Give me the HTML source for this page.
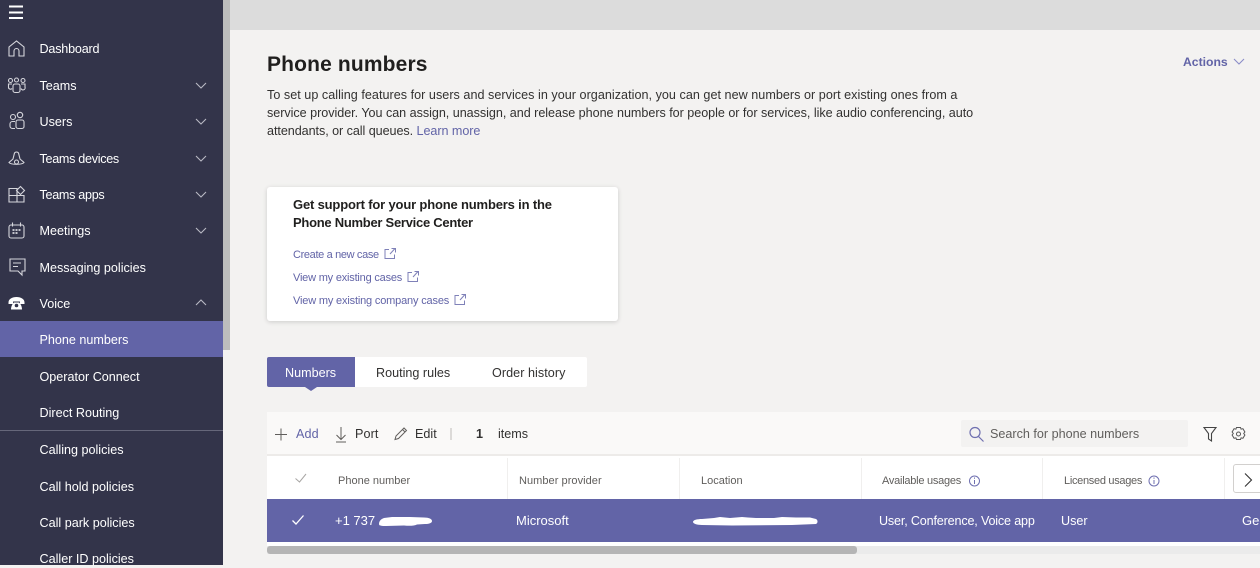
<!DOCTYPE html>
<html><head><meta charset="utf-8">
<style>
html,body{margin:0;padding:0}
body{width:1260px;height:565px;overflow:hidden;position:relative;background:#f3f2f1;font-family:"Liberation Sans",sans-serif;font-size:12.6px;color:#323130}
.a{position:absolute}
.t{position:absolute;white-space:nowrap;line-height:18px}
.n{position:absolute;left:39.500px;white-space:nowrap;color:#fff;font-size:12.600px;line-height:18px}
svg{position:absolute;overflow:visible;fill:none}
.ic{stroke:#d6d6dc;stroke-width:1.100}
.ch{stroke:#b9b9c4;stroke-width:1.100}
.h{font-size:11px;color:#605e5c;top:472px}
.l{font-size:11px;color:#6264a7}
.b{font-weight:bold;color:#201f1e;font-size:13px}
</style></head><body>
<div class="a" style="left:0;top:0;width:223px;height:565px;background:#33344a"></div>
<div class="a" style="left:223px;top:0;width:7px;height:565px;background:#f3f2f1"></div>
<div class="a" style="left:223px;top:0;width:7px;height:350px;background:#bdbdbd"></div>
<div class="a" style="left:230px;top:0;width:1030px;height:30px;background:#dcdcdc"></div>

<svg style="left:0;top:0" width="223" height="320">
<path d="M9 6.500h14M9 12.500h14M9 18h14" stroke="#fff" stroke-width="2"/>
<path class="ic" d="M9 56v-9l7.500-6 7.500 6v9h-5v-5a2.500 2.500 0 0 0-5 0v5z"/>
<g class="ic"><circle cx="10.500" cy="80.500" r="2"/><circle cx="16.500" cy="80" r="2"/><circle cx="23" cy="80.500" r="2"/><rect x="13" y="84" width="7" height="8.500" rx="2"/><path d="M12 84H8.500v3a2 2 0 0 0 3.500 1.500M21 84h4v3a2 2 0 0 1-4 1.500"/></g>
<g class="ic"><circle cx="13" cy="117" r="2.500"/><circle cx="20" cy="115" r="2.700"/><rect x="16" y="120" width="8" height="8.500" rx="2"/><path d="M15 121.500h-2.500a2.500 2.500 0 0 0-2.500 2.500v2a2.500 2.500 0 0 0 2.500 2.500H15"/></g>
<g class="ic"><path d="M14.500 153a2.500 2.500 0 0 1 4 0l1.500 6 4 3.500c-1 1.500-4 1.800-7.500 1.800S10 164 9 162.500l4-3.500z"/><circle cx="16.500" cy="162" r="2"/></g>
<g class="ic"><path d="M9 188.500h8v13.500H9zM9 195.500h15v6.500h-7"/><path d="M20.500 186.500l4 4-4 4-4-4z"/></g>
<g class="ic"><rect x="9" y="225" width="15" height="13" rx="2"/><path d="M12.500 222.500v4M20.500 222.500v4"/><path d="M12.500 230h8M12.500 233h5" stroke-width="1.700" stroke-dasharray="2 1"/></g>
<g class="ic"><path d="M10 259h15v12h-3v4l-4-4h-8z"/><path d="M13 263h8M13 266.500h5"/></g>
<path fill="#fff" d="M8.500 302.500c0-3.500 3.500-5.500 8-5.500s8 2 8 5.500v1.500H20v-2.500h-7V304H8.500z"/>
<path fill="#fff" d="M11 309.500c0-3 1.500-6 3-7h5c1.500 1 3 4 3 7z"/><circle cx="16.500" cy="305.500" r="1.800" fill="#33344a"/>
<g class="ch">
<path d="M196 83l5 5 5-5M196 119l5 5 5-5M196 156l5 5 5-5M196 192l5 5 5-5M196 228l5 5 5-5"/>
<path d="M196 305l5-5 5 5"/>
</g>
</svg>

<div class="n" style="top:40px;letter-spacing:-.2px">Dashboard</div>
<div class="n" style="top:77px">Teams</div>
<div class="n" style="top:113px">Users</div>
<div class="n" style="top:150px;letter-spacing:-.3px">Teams devices</div>
<div class="n" style="top:186px;letter-spacing:-.3px">Teams apps</div>
<div class="n" style="top:222px">Meetings</div>
<div class="n" style="top:259px">Messaging policies</div>
<div class="n" style="top:295px">Voice</div>
<div class="a" style="left:0;top:321px;width:223px;height:36px;background:#6264a7"></div>
<div class="n" style="top:331px">Phone numbers</div>
<div class="n" style="top:368px">Operator Connect</div>
<div class="n" style="top:404px">Direct Routing</div>
<div class="a" style="left:0;top:430px;width:223px;height:1px;background:#66677a"></div>
<div class="n" style="top:441px">Calling policies</div>
<div class="n" style="top:478px">Call hold policies</div>
<div class="n" style="top:514px">Call park policies</div>
<div class="n" style="top:550px">Caller ID policies</div>

<div class="t" style="left:267px;top:52px;font-size:21px;line-height:26px;font-weight:bold;color:#201f1e;letter-spacing:.15px">Phone numbers</div>
<div class="t" style="left:1183px;top:53px;color:#6264a7;font-weight:bold;font-size:12.200px">Actions</div>
<svg style="left:1233px;top:58px" width="12" height="8"><path d="M1 1l5 5 5-5" stroke="#8b8cc7" stroke-width="1.100"/></svg>

<div class="t" style="left:267px;top:86px;letter-spacing:.03px">To set up calling features for users and services in your organization, you can get new numbers or port existing ones from a</div>
<div class="t" style="left:267px;top:104px;letter-spacing:-.035px">service provider. You can assign, unassign, and release phone numbers for people or for services, like audio conferencing, auto</div>
<div class="t" style="left:267px;top:122px;letter-spacing:-.06px">attendants, or call queues. <span style="color:#6264a7">Learn more</span></div>

<div class="a" style="left:267px;top:187px;width:351px;height:134px;background:#fff;border-radius:3px;box-shadow:0 1px 5px rgba(0,0,0,.16)"></div>
<div class="t b" style="left:293px;top:196px;letter-spacing:-.17px">Get support for your phone numbers in the</div>
<div class="t b" style="left:293px;top:214px;letter-spacing:-.27px">Phone Number Service Center</div>
<div class="t l" style="left:293px;top:246px;letter-spacing:-.35px">Create a new case</div>
<div class="t l" style="left:293px;top:269px;letter-spacing:-.2px">View my existing cases</div>
<div class="t l" style="left:293px;top:292px;letter-spacing:-.17px">View my existing company cases</div>
<svg style="left:0;top:0" width="1260" height="565">
<g stroke="#7f81b8" stroke-width="1">
<path d="M389 249.500h-4v9h9.500v-4M390 254l5-5.500M391.500 248.500h4v4"/>
<path d="M412 272.500h-4v9h9.500v-4M413 277l5-5.500M414.500 271.500h4v4"/>
<path d="M459 295.500h-4v9h9.500v-4M460 300l5-5.500M461.500 294.500h4v4"/>
</g></svg>

<div class="a" style="left:267px;top:357px;width:320px;height:30px;background:#fff;border-radius:2px"></div>
<div class="a" style="left:267px;top:357px;width:88px;height:30px;background:#6264a7;border-radius:2px 0 0 2px"></div>
<div class="a" style="left:305px;top:387px;width:0;height:0;border-left:6px solid transparent;border-right:6px solid transparent;border-top:4px solid #6264a7"></div>
<div class="t" style="left:285px;top:364px;color:#fff">Numbers</div>
<div class="t" style="left:376px;top:364px">Routing rules</div>
<div class="t" style="left:492px;top:364px;letter-spacing:.05px">Order history</div>

<div class="a" style="left:267px;top:412px;width:993px;height:43px;background:#faf9f8"></div>
<div class="a" style="left:267px;top:454px;width:993px;height:2px;background:#edebe9"></div>
<div class="a" style="left:267px;top:456px;width:993px;height:43px;background:#fff"></div>
<div class="a" style="left:507px;top:458px;width:1px;height:41px;background:#f0efee"></div>
<div class="a" style="left:679px;top:458px;width:1px;height:41px;background:#f0efee"></div>
<div class="a" style="left:861px;top:458px;width:1px;height:41px;background:#f0efee"></div>
<div class="a" style="left:1042px;top:458px;width:1px;height:41px;background:#f0efee"></div>
<div class="a" style="left:1224px;top:458px;width:1px;height:41px;background:#f0efee"></div>
<div class="a" style="left:267px;top:499px;width:993px;height:43px;background:#6264a7"></div>
<div class="a" style="left:267px;top:542px;width:993px;height:4px;background:#fff"></div>
<div class="a" style="left:267px;top:546px;width:993px;height:8px;background:#ebebeb"></div>
<div class="a" style="left:267px;top:546px;width:590px;height:8px;background:#b5b5b5;border-radius:3px"></div>
<div class="a" style="left:961px;top:420px;width:227px;height:27px;background:#f3f2f1;border-radius:2px"></div>

<svg style="left:0;top:0" width="1260" height="565">
<path d="M281 428.500v12M275 434.500h12" stroke="#605e5c" stroke-width="1"/>
<path d="M341 427v12M336.500 435l4.500 4.500 4.500-4.500M336 442h10" stroke="#605e5c" stroke-width="1"/>
<path d="M395 439.500l1-3.500 8-8 2.500 2.500-8 8zM402.500 429.500l2.500 2.500" stroke="#605e5c" stroke-width="1"/>
<path d="M451 428v12" stroke="#bdbbb9" stroke-width="1"/>
<circle cx="975" cy="432.500" r="5" stroke="#6f70b0" stroke-width="1.200"/><path d="M978.500 436.500l5 5" stroke="#6f70b0" stroke-width="1.200"/>
<path d="M1204 427.500h12l-4.500 6v7.500l-3-2v-5.500z" stroke="#444" stroke-width="1.100"/>
<circle cx="1238.500" cy="434" r="2" stroke="#555" stroke-width="1"/>
<path d="M1236.500 427.500h4l.6 1.700 1.800-.5 2 3.300-1.200 1.500 1.200 1.500-2 3.300-1.800-.5-.6 1.700h-4l-.6-1.700-1.800.5-2-3.300 1.200-1.500-1.200-1.500 2-3.300 1.800.5z" stroke="#555" stroke-width="1"/>
<path d="M295.500 478.500l4 3.500 6.500-8" stroke="#a8a6a4" stroke-width="1"/>
<path d="M292.500 520.500l3.500 3.500 7.500-8.500" stroke="#fff" stroke-width="1.300"/>
<circle cx="974.500" cy="481" r="5" stroke="#6f70b0" stroke-width="1"/><path d="M974.500 480v4M974.500 477.500v1.200" stroke="#6f70b0" stroke-width="1"/>
<circle cx="1154" cy="481" r="5" stroke="#6f70b0" stroke-width="1"/><path d="M1154 480v4M1154 477.500v1.200" stroke="#6f70b0" stroke-width="1"/>
<path d="M1245 473.500l6.500 6.500-6.500 6.500" stroke="#333" stroke-width="1.100"/>
<path fill="#fff" d="M379 524c0-3 2-5 5-6l8-1 18 0 14 0.500c5 0 8 1.500 8 3.500s-3 3-7 3l-8 0.500c-3 1.500-8 1.500-13 1l-18 0.500c-4 0-7 0-7-2z"/>
<path fill="#fff" d="M693 522c0-2 4-3 9-3l12-1 6-1 10 1 12-1 6 .500 8 .500 18 0 8-1 14 .500 14 0 6 1.500c2 1 2 4 0 5l-24 1-60 .500-30-.500c-5 0-9-1.500-9-3z"/>
</svg>
<div class="a" style="left:1233px;top:464px;width:30px;height:29px;border:1px solid #d2d0ce;border-radius:3px;box-sizing:border-box"></div>

<div class="t" style="left:296px;top:425px;color:#6264a7;letter-spacing:.1px">Add</div>
<div class="t" style="left:355px;top:425px;letter-spacing:.1px">Port</div>
<div class="t" style="left:415px;top:425px">Edit</div>
<div class="t" style="left:476px;top:425px;font-weight:bold">1</div>
<div class="t" style="left:498px;top:425px">items</div>
<div class="t" style="left:990px;top:425px;color:#605e5c">Search for phone numbers</div>

<div class="t h" style="left:338px">Phone number</div>
<div class="t h" style="left:519px;letter-spacing:.05px">Number provider</div>
<div class="t h" style="left:701px">Location</div>
<div class="t h" style="left:882px;letter-spacing:-.25px">Available usages</div>
<div class="t h" style="left:1064px;letter-spacing:-.3px">Licensed usages</div>

<div class="t" style="left:335px;top:512px;color:#fff;font-size:13px">+1 737</div>
<div class="t" style="left:516px;top:512px;color:#fff;font-size:13px">Microsoft</div>
<div class="t" style="left:879px;top:512px;color:#fff;letter-spacing:-.17px">User, Conference, Voice app</div>
<div class="t" style="left:1061px;top:512px;color:#fff">User</div>
<div class="t" style="left:1242px;top:512px;color:#fff;font-size:13px">Geo</div>
</body></html>
